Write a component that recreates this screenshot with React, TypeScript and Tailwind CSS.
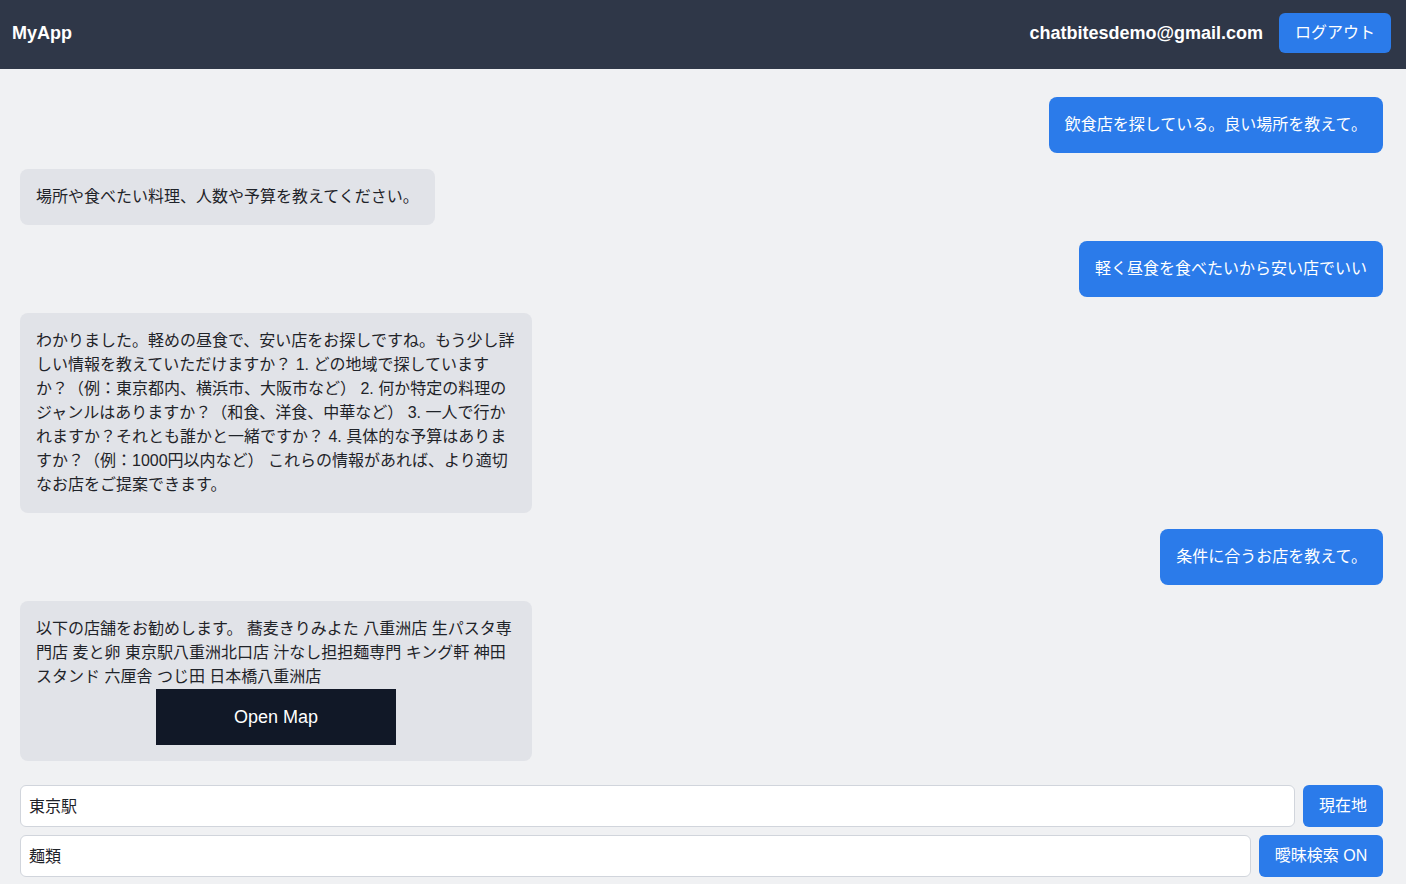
import React from 'react';

type Message = { role: 'user' | 'bot'; text: string; map?: boolean };

const MESSAGES: Message[] = [
  { role: 'user', text: '飲食店を探している。良い場所を教えて。' },
  { role: 'bot', text: '場所や食べたい料理、人数や予算を教えてください。' },
  { role: 'user', text: '軽く昼食を食べたいから安い店でいい' },
  {
    role: 'bot',
    text: 'わかりました。軽めの昼食で、安い店をお探しですね。もう少し詳しい情報を教えていただけますか？ 1. どの地域で探していますか？（例：東京都内、横浜市、大阪市など） 2. 何か特定の料理のジャンルはありますか？（和食、洋食、中華など） 3. 一人で行かれますか？それとも誰かと一緒ですか？ 4. 具体的な予算はありますか？（例：1000円以内など） これらの情報があれば、より適切なお店をご提案できます。',
  },
  { role: 'user', text: '条件に合うお店を教えて。' },
  {
    role: 'bot',
    text: '以下の店舗をお勧めします。 蕎麦きりみよた 八重洲店 生パスタ専門店 麦と卵 東京駅八重洲北口店 汁なし担担麺専門 キング軒 神田スタンド 六厘舎 つじ田 日本橋八重洲店',
    map: true,
  },
];

function Bubble({ msg }: { msg: Message }) {
  if (msg.role === 'user') {
    return (
      <div className="flex justify-end">
        <div className="rounded-lg bg-[#2b7bea] px-4 py-4 text-base leading-6 text-white">{msg.text}</div>
      </div>
    );
  }
  return (
    <div className="flex justify-start">
      <div className="max-w-lg rounded-lg bg-[#e1e3e8] px-4 py-4 text-base leading-6 text-[#1f2329]">
        <p>{msg.text}</p>
        {msg.map && (
          <button className="mx-auto block h-14 w-60 bg-[#111827] text-lg text-white">Open Map</button>
        )}
      </div>
    </div>
  );
}

export default function App(): React.ReactElement {
  return (
    <div
      className="flex min-h-[884px] flex-col bg-[#f0f1f3]"
      style={{ fontFamily: '"Liberation Sans", "Noto Sans CJK JP", sans-serif' }}
    >
      {/* Header */}
      <header className="flex h-[69px] items-center justify-between bg-[#2f3748] pb-[3px] pl-3 pr-[15px] text-white">
        <span className="text-lg font-bold">MyApp</span>
        <div className="flex items-center gap-4">
          <span className="text-lg font-bold">chatbitesdemo@gmail.com</span>
          <button className="h-10 rounded-md bg-[#2b7bea] px-4 text-base text-white">ログアウト</button>
        </div>
      </header>

      <main className="pl-5 pr-[23px] pt-7">
        {/* Chat log */}
        <div className="space-y-4">
          {MESSAGES.map((m, i) => (
            <Bubble key={i} msg={m} />
          ))}
        </div>

        {/* Search inputs */}
        <div className="mt-6 space-y-2">
          <div className="flex gap-2">
            <input
              readOnly
              value="東京駅"
              className="h-[42px] flex-1 rounded-md border border-gray-300 bg-white px-2 pb-[3px] text-base text-[#1f2329] outline-none"
            />
            <button className="h-[42px] w-20 rounded-md bg-[#2b7bea] text-base text-white">現在地</button>
          </div>
          <div className="flex gap-2">
            <input
              readOnly
              value="麺類"
              className="h-[42px] flex-1 rounded-md border border-gray-300 bg-white px-2 pb-[3px] text-base text-[#1f2329] outline-none"
            />
            <button className="h-[42px] w-[124px] rounded-md bg-[#2b7bea] text-base text-white">曖昧検索 ON</button>
          </div>
        </div>
      </main>
    </div>
  );
}
